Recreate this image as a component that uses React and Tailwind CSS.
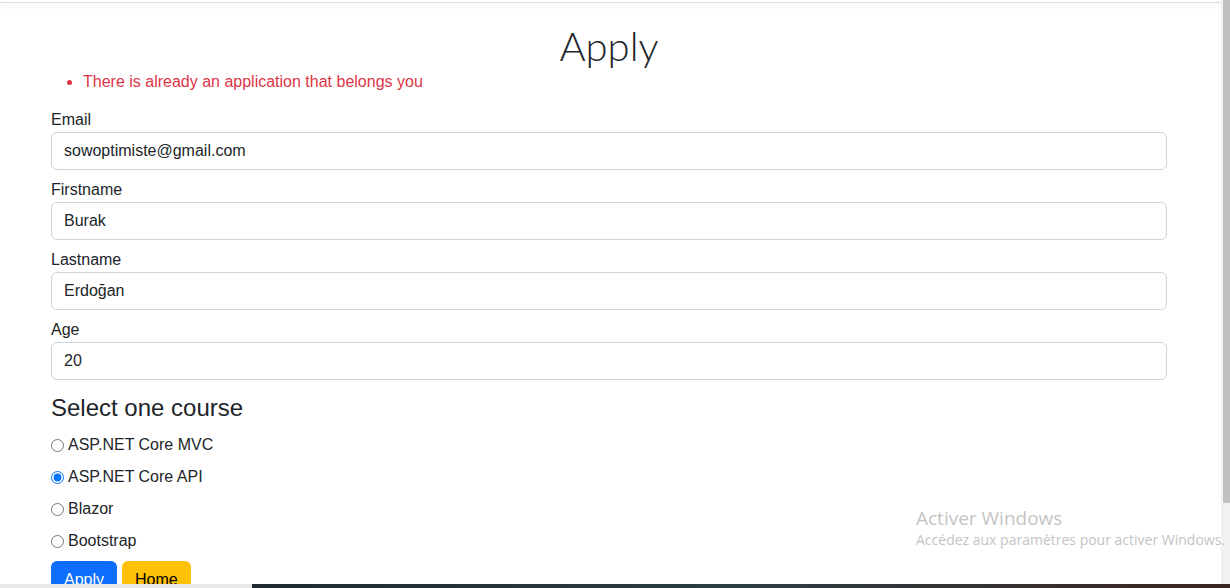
import React from 'react'

const fields = [
  { label: 'Email', value: 'sowoptimiste@gmail.com' },
  { label: 'Firstname', value: 'Burak' },
  { label: 'Lastname', value: 'Erdoğan' },
  { label: 'Age', value: '20' },
]

const courses = ['ASP.NET Core MVC', 'ASP.NET Core API', 'Blazor', 'Bootstrap']

export default function App() {
  return (
    <div className="relative h-[588px] w-[1230px] overflow-hidden bg-white font-['Liberation_Sans',Arial,sans-serif] text-[#212529]">
      <div className="flex h-[584px]">
        <div className="flex-1">
          {/* navbar edge */}
          <div className="h-[3px] border-b border-[#dedede] bg-white shadow-[0_4px_10px_rgba(0,0,0,0.05)]" />

          <div className="ml-[51px] w-[1116px]">
            <h1 className="mt-[19px] text-center font-['Lato',sans-serif] text-[40px] font-light leading-[48px]">
              Apply
            </h1>

            <ul className="mb-[14px] list-disc pl-[32px] text-[16px] leading-[24px] text-[#dc3545]">
              <li>There is already an application that belongs you</li>
            </ul>

            <form>
              {fields.map((f) => (
                <div key={f.label} className="mb-[8px]">
                  <label className="block text-[16px] leading-[24px]">{f.label}</label>
                  <input
                    readOnly
                    value={f.value}
                    className="block h-[38px] w-full rounded-[6px] border border-[#ced4da] px-[12px] text-[16px] text-[#212529] outline-none"
                  />
                </div>
              ))}

              <h4 className="mt-[13px] mb-[11px] text-[24px] leading-[29px]">Select one course</h4>

              {courses.map((c, i) => (
                <div key={c} className="mb-[8px] flex h-[24px] items-center text-[16px] leading-[24px] last:mb-[6px]">
                  <input
                    type="radio"
                    name="course"
                    defaultChecked={i === 1}
                    className="m-0 mr-[4px] h-[13px] w-[13px]"
                  />
                  <label>{c}</label>
                </div>
              ))}

              <div className="flex gap-[5px]">
                <button
                  type="button"
                  className="h-[38px] rounded-[6px] bg-[#0d6efd] px-[13px] text-[16px] text-white"
                >
                  Apply
                </button>
                <button
                  type="button"
                  className="h-[38px] rounded-[6px] bg-[#ffc107] px-[13px] text-[16px] text-black"
                >
                  Home
                </button>
              </div>
            </form>
          </div>
        </div>

        {/* scrollbar */}
        <div className="flex w-[9px] justify-end bg-[#f1f1f1]">
          <div className="h-[503px] w-[7px] bg-[#c1c1c1]" />
        </div>
      </div>

      {/* windows watermark */}
      <div className="absolute left-[916px] top-[506px] font-['Open_Sans',sans-serif] text-[#c4c4c4]">
        <div className="text-[19px] leading-[24px]">Activer Windows</div>
        <div className="text-[14px] leading-[20px]">Accédez aux paramètres pour activer Windows.</div>
      </div>

      {/* taskbar edge */}
      <div className="absolute bottom-0 left-0 flex h-[4px] w-full">
        <div className="w-[252px] bg-[#e8e8e8]" />
        <div className="flex-1 bg-gradient-to-r from-[#1e2a30] via-[#2c3e44] to-[#3a2520]" />
      </div>
    </div>
  )
}
